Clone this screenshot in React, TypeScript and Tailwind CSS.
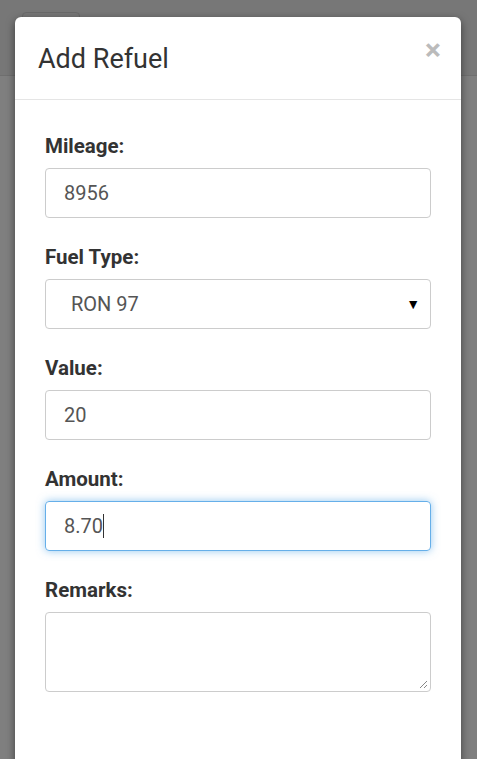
export default function App() {
  const f = { fontFamily: "Roboto, 'Liberation Sans', sans-serif" };
  const Group = ({ label, children }: { label: string; children: React.ReactNode }) => (
    <div className="mb-[25px]">
      <div className="text-[20.5px] leading-[28px] font-bold text-[#333] mb-[8px]">{label}</div>
      {children}
    </div>
  );
  const inp = "h-[50px] w-full rounded-[4px] border border-[#ccc] flex items-center px-[18px] text-[20px] text-[#555]";
  return (
    <div style={f} className="relative w-[477px] h-[759px] overflow-hidden bg-[#7f7f7f]">
      <div className="absolute left-0 top-0 w-full h-[76px] bg-[#777] border-b border-[#6f6f6f]">
        <div className="absolute left-[22px] top-[12px] w-[58px] h-[40px] rounded-[4px] border border-[#6a6a6a]" />
      </div>
      <div className="absolute left-[15px] top-[17px] w-[446px] h-[760px] bg-white rounded-[6px] shadow-[0_3px_9px_rgba(0,0,0,0.5)]">
        <div className="h-[83px] border-b border-[#e5e5e5] flex items-start justify-between px-[23px]">
          <div className="text-[27px] leading-[38px] text-[#333] mt-[23px]">Add Refuel</div>
          <div className="text-[30px] font-bold text-[#bbb] leading-none mt-[18px] mr-[-3px]">×</div>
        </div>
        <div className="px-[30px] pt-[32px]">
          <Group label="Mileage:"><div className={inp}>8956</div></Group>
          <Group label="Fuel Type:">
            <div className={inp + " justify-between pl-[25px] pr-[10px]"}>
              <span>RON 97</span>
              <span className="text-[14px] text-black">▼</span>
            </div>
          </Group>
          <Group label="Value:"><div className={inp}>20</div></Group>
          <Group label="Amount:">
            <div className={inp + " !border-[#66afe9] shadow-[0_0_8px_rgba(102,175,233,0.7)]"}>
              8.70<span className="inline-block w-px h-[24px] bg-[#333]" />
            </div>
          </Group>
          <Group label="Remarks:">
            <div className="relative h-[80px] w-full rounded-[4px] border border-[#ccc]">
              <svg className="absolute right-[2px] bottom-[2px]" width="10" height="10" viewBox="0 0 10 10">
                <path d="M9 2 L2 9 M9 6 L6 9" stroke="#888" strokeWidth="1" />
              </svg>
            </div>
          </Group>
        </div>
      </div>
    </div>
  );
}
